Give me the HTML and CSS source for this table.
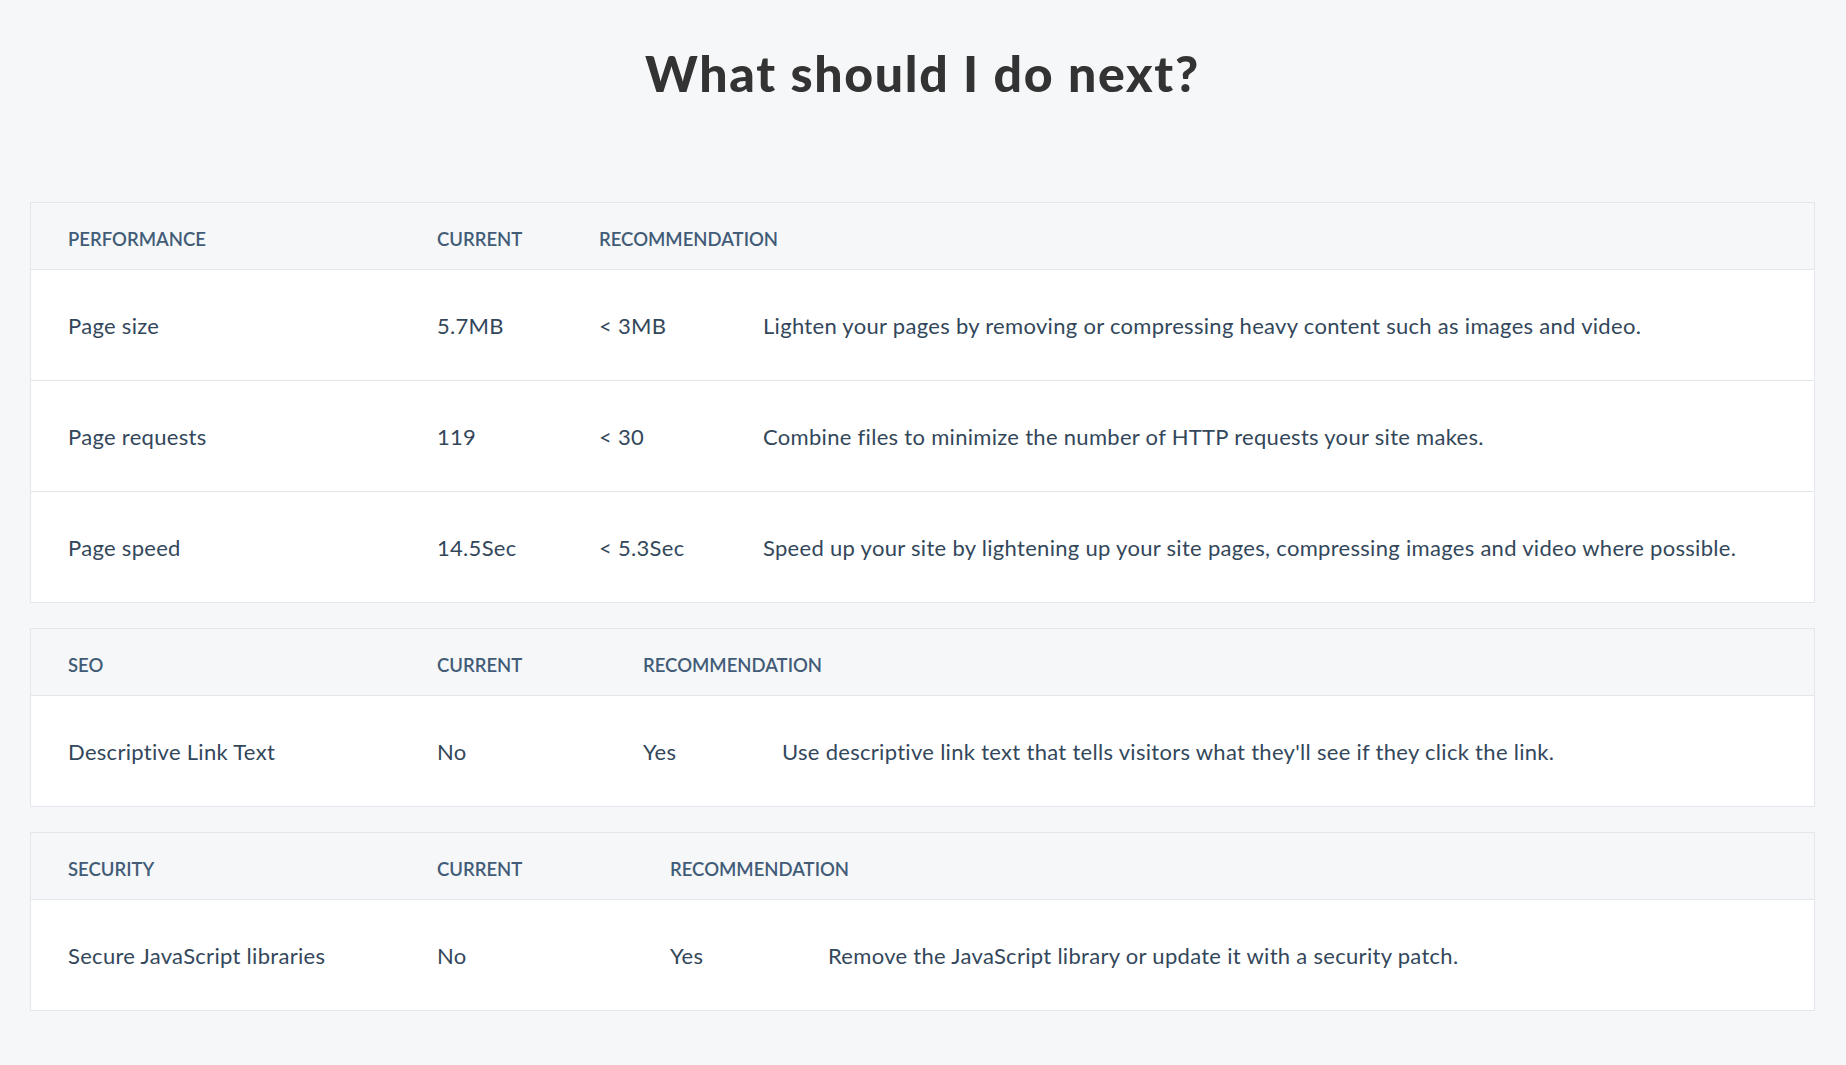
FILE: index.html
```html
<!DOCTYPE html>
<html lang="en">
<head>
<meta charset="utf-8">
<title>What should I do next?</title>
<link rel="stylesheet" href="styles.css">
</head>
<body>
<main class="page">
  <h1 class="title">What should I do next?</h1>

  <section class="table t-perf">
    <div class="row head">
      <div class="cell">PERFORMANCE</div>
      <div class="cell">CURRENT</div>
      <div class="cell span">RECOMMENDATION</div>
    </div>
    <div class="row">
      <div class="cell">Page size</div>
      <div class="cell">5.7MB</div>
      <div class="cell">&lt; 3MB</div>
      <div class="cell">Lighten your pages by removing or compressing heavy content such as images and video.</div>
    </div>
    <div class="row">
      <div class="cell">Page requests</div>
      <div class="cell">119</div>
      <div class="cell">&lt; 30</div>
      <div class="cell">Combine files to minimize the number of HTTP requests your site makes.</div>
    </div>
    <div class="row">
      <div class="cell">Page speed</div>
      <div class="cell">14.5Sec</div>
      <div class="cell">&lt; 5.3Sec</div>
      <div class="cell">Speed up your site by lightening up your site pages, compressing images and video where possible.</div>
    </div>
  </section>

  <section class="table t-seo">
    <div class="row head">
      <div class="cell">SEO</div>
      <div class="cell">CURRENT</div>
      <div class="cell span">RECOMMENDATION</div>
    </div>
    <div class="row">
      <div class="cell">Descriptive Link Text</div>
      <div class="cell">No</div>
      <div class="cell">Yes</div>
      <div class="cell">Use descriptive link text that tells visitors what they'll see if they click the link.</div>
    </div>
  </section>

  <section class="table t-sec">
    <div class="row head">
      <div class="cell">SECURITY</div>
      <div class="cell">CURRENT</div>
      <div class="cell span">RECOMMENDATION</div>
    </div>
    <div class="row">
      <div class="cell">Secure JavaScript libraries</div>
      <div class="cell">No</div>
      <div class="cell">Yes</div>
      <div class="cell">Remove the JavaScript library or update it with a security patch.</div>
    </div>
  </section>
</main>
</body>
</html>
```

FILE: styles.css
```css
html, body {
  margin: 0;
  padding: 0;
  background: #f5f7f9;
}

body {
  font-family: Lato, "Liberation Sans", sans-serif;
  color: #33475b;
}

.page {
  padding: 0 31px 40px 30px;
}

.title {
  margin: 0;
  padding-top: 43px;
  height: 202px;
  box-sizing: border-box;
  text-align: center;
  font-family: Lato, "Liberation Sans", sans-serif;
  font-weight: 900;
  font-size: 50px;
  letter-spacing: 1.7px;
  line-height: 60px;
  color: #333333;
}

.table {
  border: 1px solid #e3e6ec;
  background: #ffffff;
  margin-bottom: 25px;
}

.row {
  display: grid;
  padding-left: 37px;
  height: 110px;
  align-items: center;
  border-top: 1px solid #e3e6ec;
  font-size: 22px;
  letter-spacing: 0.3px;
  color: #33475b;
}

.row.head {
  height: 66px;
  border-top: 0;
  background: #f5f7f9;
  font-size: 18.5px;
  letter-spacing: 0;
  font-weight: 600;
  color: #425b76;
  padding-top: 6px;
  box-sizing: border-box;
}

.cell {
  white-space: nowrap;
}

.span {
  grid-column: 3 / 5;
}

.t-perf .row { grid-template-columns: 369px 162px 164px 1fr; }
.t-seo .row  { grid-template-columns: 369px 206px 139px 1fr; }
.t-sec .row  { grid-template-columns: 369px 233px 158px 1fr; }
```
